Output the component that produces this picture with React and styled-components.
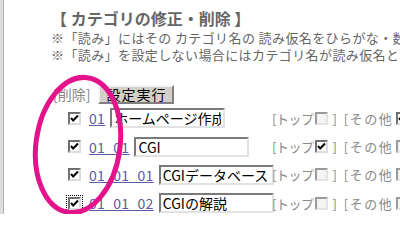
import React from 'react'
import styled, { createGlobalStyle } from 'styled-components'

const GlobalStyle = createGlobalStyle`
body {
  margin: 0;
  background: #fff;
  font-family: "Noto Sans CJK JP", "Liberation Sans", sans-serif;
  overflow: hidden;
}
`

const Frame = styled.div`
position: relative;
height: 214px;
overflow: hidden;
border-left: 3px solid #dddddd;
`

const Inner = styled.div`
height: 100%;
border-left: 1px solid #b3b3b3;
padding: 7px 0 0 47px;
box-sizing: border-box;
`

const Title = styled.h2`
margin: 0;
font-size: 16px;
line-height: 22px;
font-weight: bold;
color: #666;
white-space: nowrap;
`

const Note = styled.p`
margin: 0;
font-size: 13px;
line-height: 17px;
color: #666;
white-space: nowrap;
letter-spacing: 0.4px;
`

const Toolbar = styled.div`
display: flex;
align-items: center;
gap: 8px;
margin: 21px 0 0 2px;
`

const Bracket = styled.span`
font-size: 14px;
color: #888;
`

const Button = styled.button`
font-family: inherit;
font-size: 14px;
line-height: 14px;
height: 19px;
width: 76px;
padding: 0;
color: #000;
background: #d4d0c8;
border: 2px solid;
border-color: #f4f4f4 #808080 #808080 #f4f4f4;
letter-spacing: 1px;
`

const Table = styled.table`
border-collapse: collapse;
margin-left: 17px;
`

const Cell = styled.td`
height: 28.4px;
padding: 0;
white-space: nowrap;
vertical-align: middle;
`

const Entry = styled.div`
display: flex;
align-items: center;
gap: 5px;
width: 201px;
`

const Box = styled.span`
display: inline-flex;
align-items: center;
justify-content: center;
width: 13px;
height: 13px;
box-sizing: border-box;
background: ${(p) => (p.muted ? '#f4f4f4' : '#fff')};
border: 2px solid;
border-color: ${(p) => (p.muted ? '#9a9a9a #e4e4e4 #e4e4e4 #9a9a9a' : '#6f6f6f #dcdcdc #dcdcdc #6f6f6f')};
outline: ${(p) => (p.focused ? '1px dotted #000' : 'none')};
outline-offset: 1px;
margin-right: ${(p) => p.gap || 0}px;
`

const Code = styled.a`
font-size: 14px;
color: #5b5ba6;
text-decoration: underline;
letter-spacing: 0.3px;
margin-left: 3px;
`

const Field = styled.input`
font-family: inherit;
font-size: 14px;
color: #000;
width: 115px;
height: 20px;
box-sizing: border-box;
padding: 0 2px;
border: 2px solid;
border-color: #7a7a7a #e2e2e2 #e2e2e2 #7a7a7a;
`

const Flags = styled.div`
display: flex;
align-items: center;
padding-left: 3px;
font-size: 13px;
color: #8a8a8a;
`

const Label = styled.span`
margin-right: ${(p) => p.gap || 0}px;
letter-spacing: ${(p) => p.spacing || 0}px;
`

const Overlay = styled.svg`
position: absolute;
left: 0;
top: 0;
pointer-events: none;
`

const Check = ({ checked, muted, focused, gap }) => (
  <Box muted={muted} focused={focused} gap={gap}>
    {checked && (
      <svg width="9" height="9" viewBox="0 0 9 9">
        <path d="M1 4 L3.2 6.5 L8 1.5" stroke="#000" strokeWidth="2" fill="none" />
      </svg>
    )}
  </Box>
)

const rows = [
  { code: '01', name: 'ホームページ作成', top: false, other: true },
  { code: '01_01', name: 'CGI', top: true, other: false },
  { code: '01_01_01', name: 'CGIデータベース', top: false, other: false },
  { code: '01_01_02', name: 'CGIの解説', top: false, other: false, focused: true },
]

export default function App() {
  return (
    <>
      <GlobalStyle />
      <Frame>
        <Inner>
          <Title>【 カテゴリの修正・削除 】</Title>
          <Note>※「読み」にはその カテゴリ名の 読み仮名をひらがな・数字で入力してください</Note>
          <Note>※「読み」を設定しない場合にはカテゴリ名が読み仮名となります</Note>
          <Toolbar>
            <Bracket>[削除]</Bracket>
            <Button type="button">設定実行</Button>
          </Toolbar>
          <Table>
            <tbody>
              {rows.map((row) => (
                <tr key={row.code}>
                  <Cell>
                    <Entry>
                      <Check checked focused={row.focused} />
                      <Code href="#">{row.code}</Code>
                      <Field defaultValue={row.name} />
                    </Entry>
                  </Cell>
                  <Cell>
                    <Flags>
                      <Label gap={2} spacing={-0.5}>[トップ</Label>
                      <Check checked={row.top} muted={!row.top} gap={4} />
                      <Label gap={7}>]</Label>
                      <Label gap={3} spacing={1.5}>[その他</Label>
                      <Check checked={row.other} muted={!row.other} gap={3} />
                      <Label>]</Label>
                    </Flags>
                  </Cell>
                </tr>
              ))}
            </tbody>
          </Table>
        </Inner>
        <Overlay width="400" height="214" viewBox="0 0 400 214">
          <ellipse cx="75" cy="145" rx="42" ry="68" transform="rotate(8 75 145)" fill="none" stroke="#e4128b" strokeWidth="5" />
        </Overlay>
      </Frame>
    </>
  )
}
